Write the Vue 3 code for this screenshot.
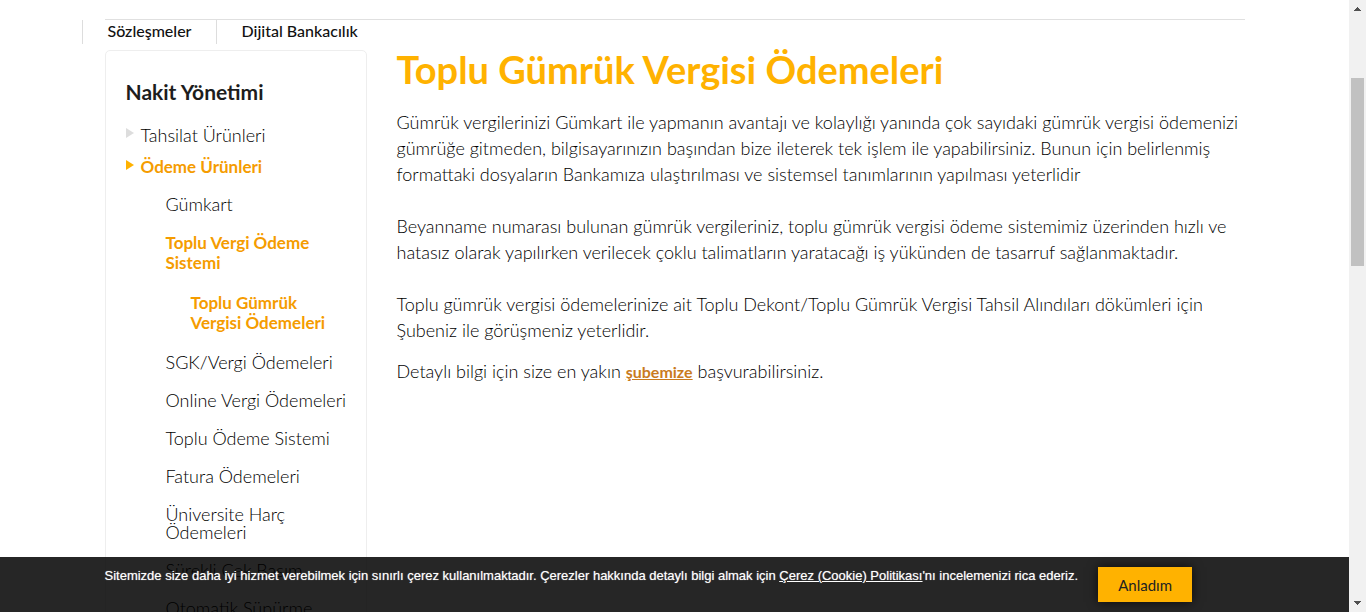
<script setup>
const tabs = ['Sözleşmeler', 'Dijital Bankacılık']
const before = ['Gümkart']
const after = [
  ['SGK/Vergi Ödemeleri'],
  ['Online Vergi Ödemeleri'],
  ['Toplu Ödeme Sistemi'],
  ['Fatura Ödemeleri'],
  ['Üniversite Harç', 'Ödemeleri'],
  ['Sürekli Çek Basım'],
  ['Otomatik Süpürme'],
]
const paragraphs = [
  [
    'Gümrük vergilerinizi Gümkart ile yapmanın avantajı ve kolaylığı yanında çok sayıdaki gümrük vergisi ödemenizi',
    'gümrüğe gitmeden, bilgisayarınızın başından bize ileterek tek işlem ile yapabilirsiniz. Bunun için belirlenmiş',
    'formattaki dosyaların Bankamıza ulaştırılması ve sistemsel tanımlarının yapılması yeterlidir',
  ],
  [
    'Beyanname numarası bulunan gümrük vergileriniz, toplu gümrük vergisi ödeme sistemimiz üzerinden hızlı ve',
    'hatasız olarak yapılırken verilecek çoklu talimatların yaratacağı iş yükünden de tasarruf sağlanmaktadır.',
  ],
  [
    'Toplu gümrük vergisi ödemelerinize ait Toplu Dekont/Toplu Gümrük Vergisi Tahsil Alındıları dökümleri için',
    'Şubeniz ile görüşmeniz yeterlidir.',
  ],
]
</script>

<template>
  <div class="page">
    <div class="viewport">
      <div class="container">
        <nav class="tabs">
          <a v-for="t in tabs" :key="t" href="#">{{ t }}</a>
        </nav>
        <div class="columns">
          <aside class="sidebar">
            <h2>Nakit Yönetimi</h2>
            <ul class="menu">
              <li><a class="top" href="#">Tahsilat Ürünleri</a></li>
              <li>
                <a class="top active" href="#">Ödeme Ürünleri</a>
                <ul class="sub">
                  <li v-for="b in before" :key="b"><a href="#">{{ b }}</a></li>
                  <li class="current">
                    <a href="#">Toplu Vergi Ödeme<br>Sistemi</a>
                    <ul class="leaf">
                      <li><a href="#">Toplu Gümrük<br>Vergisi Ödemeleri</a></li>
                    </ul>
                  </li>
                  <li v-for="a in after" :key="a[0]">
                    <a href="#"><span v-for="l in a" :key="l" class="line">{{ l }}</span></a>
                  </li>
                </ul>
              </li>
            </ul>
          </aside>
          <main class="content">
            <h1>Toplu Gümrük Vergisi Ödemeleri</h1>
            <p v-for="(p, i) in paragraphs" :key="i">
              <span v-for="l in p" :key="l" class="line">{{ l }}</span>
            </p>
            <p class="more">Detaylı bilgi için size en yakın <a href="#">şubemize</a> başvurabilirsiniz.</p>
          </main>
        </div>
      </div>
      <div class="cookie">
        <div class="cookie-inner">
          <p>Sitemizde size daha iyi hizmet verebilmek için sınırlı çerez kullanılmaktadır. Çerezler hakkında detaylı bilgi almak için <a href="#">Çerez (Cookie) Politikası</a>'nı incelemenizi rica ederiz.</p>
          <button type="button">Anladım</button>
        </div>
      </div>
    </div>
    <div class="scrollbar" aria-hidden="true">
      <svg width="17" height="17" viewBox="0 0 17 17" shape-rendering="crispEdges"><path d="M8 7h1v1h1v1h1v1h1v1H5v-1h1V9h1V8h1z" fill="#505050" /></svg>
      <div class="thumb"></div>
      <svg width="17" height="17" viewBox="0 0 17 17" shape-rendering="crispEdges"><path d="M5 6h7v1h-1v1h-1v1H9v1H8V9H7V8H6V7H5z" fill="#505050" /></svg>
    </div>
  </div>
</template>

<style>
body { margin: 0; background: #fff; }
</style>

<style scoped>
.page {
  display: flex;
  height: 100vh;
  overflow: hidden;
  font-family: Lato, sans-serif;
  font-size: 18px;
  font-weight: 300;
  color: #000;
}
.viewport { position: relative; flex: 1; min-width: 0; overflow: hidden; }
.container { max-width: 1140px; margin: 19px auto 0; border-top: 1px solid #e0e0e0; }
a { color: inherit; text-decoration: none; }
ul { list-style: none; margin: 0; padding: 0; }
.line { display: block; white-space: nowrap; }
.tabs { display: flex; margin-left: -23px; font-size: 16px; font-weight: 500; line-height: 22px; color: #111; }
.tabs a { border-left: 1px solid #ddd; padding: 0 25px 2px; }
.tabs a + a { padding-left: 24px; }
.columns { display: flex; align-items: flex-start; gap: 30px; margin-top: 6px; }
.sidebar {
  box-sizing: border-box;
  flex: 0 0 262px;
  min-width: 0;
  padding: 27px 20px;
  border: 1px solid #eee;
  border-radius: 5px;
}
h2 { margin: 0 0 13px; font-size: 21px; line-height: 28px; color: #1d1d1d; }
.top { position: relative; display: block; padding-left: 15px; line-height: 32px; }
.top::before {
  content: "";
  position: absolute;
  left: 0;
  top: 9px;
  border-left: 8px solid #ddd;
  border-top: 5px solid transparent;
  border-bottom: 5px solid transparent;
}
.top.active { color: #f59c00; font-size: 17px; font-weight: 700; }
.top.active::before { border-left-color: #ffb200; }
.sub { padding: 2px 0 0 40px; line-height: 18px; }
.sub > li { padding: 10px 0; }
.sub > li > a { display: block; }
.current { color: #f59c00; font-size: 17px; font-weight: 700; line-height: 20px; }
.leaf { padding: 20px 0 0 25px; }
.content { flex: 1; min-width: 0; line-height: 26px; }
h1 { margin: 0 0 21px; font-size: 38px; line-height: 38px; color: #ffb200; }
.content p { margin: 0 0 26px; }
.content p.more { margin-top: -11px; }
.more a { color: #c97b1e; font-size: 16px; font-weight: 700; text-decoration: underline; }
.cookie { position: absolute; inset: auto 0 0; background: rgba(0, 0, 0, 0.85); }
.cookie-inner { display: flex; align-items: flex-start; gap: 20px; max-width: 1140px; margin: 0 auto; padding: 10px 0; }
.cookie p { margin: 0; font: 13px/18px "Liberation Sans", Arial, sans-serif; color: #fff; text-shadow: 0 0 1px rgba(255, 255, 255, 0.6); }
.cookie a { text-decoration: underline; }
.cookie button {
  width: 94px;
  height: 35px;
  padding: 0;
  border: 0;
  background: #ffb200;
  box-shadow: 0 0 10px rgba(0, 0, 0, 0.7);
  font: inherit;
  font-size: 15px;
  font-weight: 400;
  color: #222;
}
.scrollbar { display: flex; flex-direction: column; flex: 0 0 17px; background: #f1f1f1; }
.thumb { height: 188px; margin: 61px 2px auto; background: #c1c1c1; }
</style>
